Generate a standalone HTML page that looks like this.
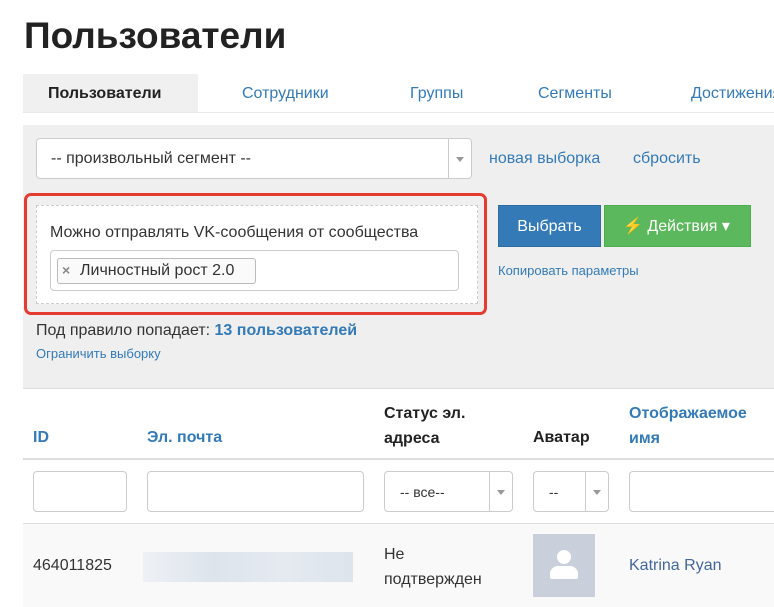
<!DOCTYPE html><html><head><meta charset="utf-8"><style>
body{margin:0;width:774px;height:606px;overflow:hidden;background:#fff;font-family:"Liberation Sans",sans-serif;position:relative;color:#333}
.a{position:absolute;white-space:nowrap}
.lnk{color:#337ab7}
.box{position:absolute;background:#fff;border:1px solid #ccc;border-radius:4px;box-sizing:border-box}
.arr{position:absolute;top:0;bottom:0;width:22px;right:0;border-left:1px solid #ccc}
.arr:after{content:"";position:absolute;left:7px;top:50%;margin-top:-2px;border:4px solid transparent;border-top:5px solid #999}
</style></head><body>
<div class="a" style="left:24px;top:15px;font-size:37px;font-weight:bold;color:#222">Пользователи</div>
<div class="a" style="left:23px;top:74px;width:175px;height:38px;background:#f0f0f0"></div>
<div class="a" style="left:23px;top:112px;width:751px;height:1px;background:#e8e8e8"></div>
<div class="a" style="left:48px;top:85px;font-size:16px;font-weight:bold;color:#222">Пользователи</div>
<div class="a lnk" style="left:242px;top:85px;font-size:16px">Сотрудники</div>
<div class="a lnk" style="left:410px;top:85px;font-size:16px">Группы</div>
<div class="a lnk" style="left:538px;top:85px;font-size:16px">Сегменты</div>
<div class="a lnk" style="left:691px;top:85px;font-size:16px">Достижения</div>
<div class="a" style="left:23px;top:125px;width:751px;height:263px;background:#efefef"></div>
<div class="box" style="left:36px;top:138px;width:436px;height:41px"><div class="arr"></div></div>
<div class="a" style="left:51px;top:150px;font-size:16px">-- произвольный сегмент --</div>
<div class="a lnk" style="left:489px;top:150px;font-size:16px">новая выборка</div>
<div class="a lnk" style="left:633px;top:150px;font-size:16px">сбросить</div>
<div class="a" style="left:24px;top:193px;width:457px;height:116px;border:3px solid #e53b30;border-radius:7px"></div>
<div class="a" style="left:36px;top:205px;width:440px;height:97px;border:1px dashed #ccc;background:#fff"></div>
<div class="a" style="left:50px;top:224px;font-size:16px">Можно отправлять VK-сообщения от сообщества</div>
<div class="box" style="left:50px;top:250px;width:409px;height:41px"></div>
<div class="a" style="left:57px;top:258px;width:197px;height:24px;border:1px solid #bbb;border-radius:3px;background:#fafafa"></div>
<div class="a" style="left:62px;top:262px;font-size:14px;color:#888;font-weight:bold">×</div>
<div class="a" style="left:80px;top:262px;font-size:16px">Личностный рост 2.0</div>
<div class="a" style="left:498px;top:205px;width:103px;height:42px;background:#337ab7;border:1px solid #2e6da4;box-sizing:border-box;color:#fff;font-size:16px;text-align:center;line-height:42px">Выбрать</div>
<div class="a" style="left:604px;top:205px;width:147px;height:42px;background:#5cb85c;border:1px solid #4cae4c;box-sizing:border-box;color:#fff;font-size:16px;line-height:42px;padding-left:18px">⚡ Действия ▾</div>
<div class="a lnk" style="left:498px;top:263px;font-size:13px">Копировать параметры</div>
<div class="a" style="left:36px;top:322px;font-size:16px">Под правило попадает: <b class="lnk">13 пользователей</b></div>
<div class="a lnk" style="left:36px;top:346px;font-size:13px">Ограничить выборку</div>
<div class="a" style="left:23px;top:388px;width:751px;height:1px;background:#ddd"></div>
<div class="a lnk" style="left:33px;top:429px;font-size:16px;font-weight:bold">ID</div>
<div class="a lnk" style="left:147px;top:429px;font-size:16px;font-weight:bold">Эл. почта</div>
<div class="a" style="left:384px;top:401px;font-size:16px;font-weight:bold;line-height:25px;color:#222">Статус эл.<br>адреса</div>
<div class="a" style="left:533px;top:429px;font-size:16px;font-weight:bold;color:#222">Аватар</div>
<div class="a lnk" style="left:629px;top:401px;font-size:16px;font-weight:bold;line-height:25px">Отображаемое<br>имя</div>
<div class="a" style="left:23px;top:458px;width:751px;height:2px;background:#ddd"></div>
<div class="box" style="left:33px;top:471px;width:94px;height:41px"></div>
<div class="box" style="left:147px;top:471px;width:217px;height:41px"></div>
<div class="box" style="left:384px;top:471px;width:129px;height:41px"><div class="arr"></div></div>
<div class="a" style="left:400px;top:484px;font-size:14px">-- все--</div>
<div class="box" style="left:533px;top:471px;width:76px;height:41px"><div class="arr"></div></div>
<div class="a" style="left:549px;top:484px;font-size:14px">--</div>
<div class="box" style="left:629px;top:471px;width:160px;height:41px"></div>
<div class="a" style="left:23px;top:523px;width:751px;height:83px;background:#f9f9f9;border-top:1px solid #ddd"></div>
<div class="a" style="left:33px;top:557px;font-size:16px">464011825</div>
<div class="a" style="left:143px;top:552px;width:210px;height:30px;background:linear-gradient(90deg,#eef1f5,#dde4ec,#e5eaf0,#dde4ec)"></div>
<div class="a" style="left:384px;top:542px;font-size:16px;line-height:25px">Не<br>подтвержден</div>
<div class="a" style="left:533px;top:534px;width:62px;height:63px;background:#c9d0dc"></div>
<div class="a" style="left:557px;top:550px;width:14px;height:14px;border-radius:50%;background:#fff"></div>
<div class="a" style="left:550px;top:566px;width:28px;height:13px;border-radius:8px 8px 2px 2px;background:#fff"></div>
<div class="a" style="left:629px;top:557px;font-size:16px;color:#44679a">Katrina Ryan</div>
</body></html>
